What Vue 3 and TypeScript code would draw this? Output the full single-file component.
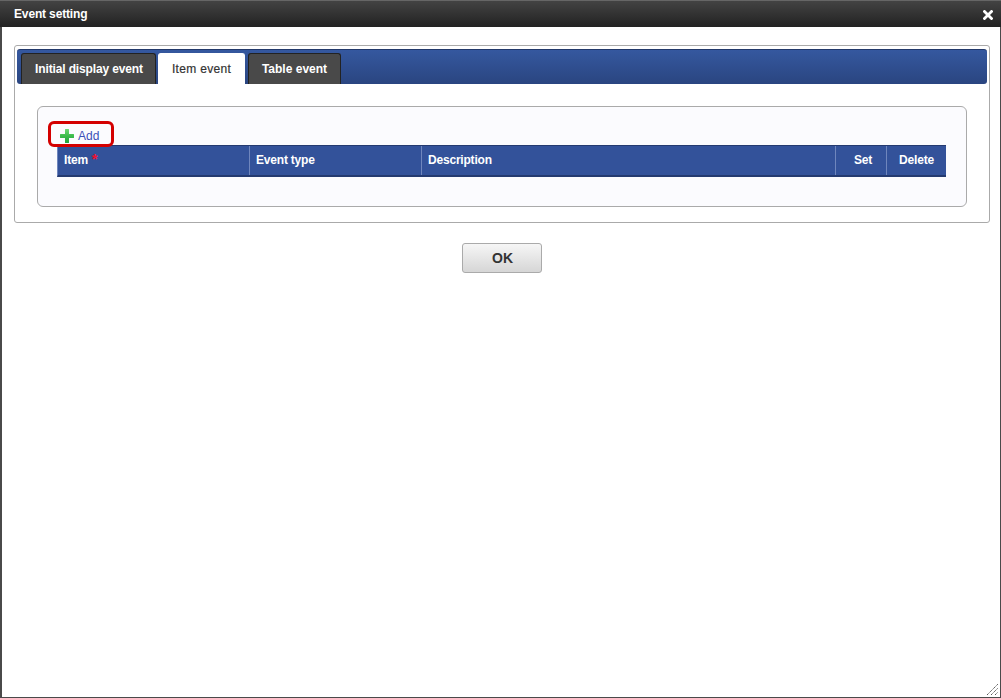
<script setup lang="ts">
const tabs = [
  { label: 'Initial display event', active: false },
  { label: 'Item event', active: true },
  { label: 'Table event', active: false },
]
const columns = [
  { label: 'Item', width: 192, required: true, align: 'left' },
  { label: 'Event type', width: 172, required: false, align: 'left' },
  { label: 'Description', width: 414, required: false, align: 'left' },
  { label: 'Set', width: 51, required: false, align: 'center' },
  { label: 'Delete', width: 60, required: false, align: 'center' },
]
</script>

<template>
  <div class="window">
    <header class="titlebar">
      <span class="title">Event setting</span>
      <svg class="close" width="10" height="10" viewBox="0 0 10 10" aria-label="Close">
        <path d="M1.5 1.5 L8.5 8.5 M8.5 1.5 L1.5 8.5" stroke="#fff" stroke-width="2.8" stroke-linecap="square" />
      </svg>
    </header>
    <main class="content">
      <section class="panel">
        <nav class="tabbar">
          <button v-for="tab in tabs" :key="tab.label" class="tab" :class="{ active: tab.active }">{{ tab.label }}</button>
        </nav>
        <div class="tabbody">
          <div class="group">
            <div class="addrow">
              <span class="add">
                <svg width="14" height="14" viewBox="0 0 14 14">
                  <defs>
                    <linearGradient id="plus" x1="0" y1="0" x2="0" y2="1">
                      <stop offset="0" stop-color="#6fd873" />
                      <stop offset="0.5" stop-color="#3dbb4c" />
                      <stop offset="1" stop-color="#22a33c" />
                    </linearGradient>
                  </defs>
                  <path d="M5 0.5q0-.5.5-.5h3q.5 0 .5.5V5h4.5q.5 0 .5.5v3q0 .5-.5.5H9v4.5q0 .5-.5.5h-3q-.5 0-.5-.5V9H.5Q0 9 0 8.5v-3Q0 5 .5 5H5z" fill="url(#plus)" />
                </svg>
                <span class="addlabel">Add</span>
              </span>
              <span class="highlight"></span>
            </div>
            <div class="thead">
              <div
                v-for="col in columns"
                :key="col.label"
                class="th"
                :class="{ center: col.align === 'center' }"
                :style="{ width: col.width + 'px' }"
              >
                {{ col.label }}<span v-if="col.required" class="req"> *</span>
              </div>
            </div>
          </div>
        </div>
      </section>
      <div class="actions">
        <button class="ok">OK</button>
      </div>
    </main>
    <svg class="grip" width="13" height="13" viewBox="0 0 13 13">
      <path d="M1 12 L12 1 M5 12 L12 5 M9 12 L12 9" stroke="#555" stroke-width="1" stroke-dasharray="1.4 0.6" fill="none" />
    </svg>
  </div>
</template>

<style>
html, body { margin: 0; background: #fff; }
</style>

<style scoped>
.window {
  position: relative;
  box-sizing: border-box;
  width: 1001px;
  height: 698px;
  display: flex;
  flex-direction: column;
  background: #fff;
  border: 1px solid #4a4a4a;
  border-left-width: 2px;
  border-top: 0;
  font-family: "Liberation Sans", Arial, sans-serif;
}
.titlebar {
  box-sizing: border-box;
  height: 27px;
  flex: none;
  margin: 0 -1px 0 -2px;
  display: flex;
  align-items: center;
  justify-content: space-between;
  padding: 0 8px 0 14px;
  background: linear-gradient(#434343, #222);
  border-top: 1px solid #666;
  color: #fff;
  font-size: 12px;
  font-weight: bold;
}
.title { letter-spacing: -0.15px; }
.close { margin-top: 2px; }
.content {
  flex: 1;
  padding: 18px 10px 0 12px;
}
.panel {
  box-sizing: border-box;
  width: 976px;
  height: 178px;
  border: 1px solid #aaa;
  border-radius: 3px;
  padding: 3px 2px;
}
.tabbar {
  box-sizing: border-box;
  height: 35px;
  display: flex;
  align-items: flex-end;
  gap: 2px;
  padding-left: 4px;
  background: linear-gradient(#35589f, #2a4580);
  border-top: 1px solid #22386a;
  border-radius: 3px;
}
.tab {
  box-sizing: border-box;
  height: 31px;
  padding: 0;
  border: 1px solid #222;
  border-bottom: 0;
  border-radius: 3px 3px 0 0;
  background: #494949;
  color: #fff;
  font: bold 12px "Liberation Sans", Arial, sans-serif;
}
.tab.active {
  background: #fff;
  color: #333;
  font-weight: normal;
  letter-spacing: 0.3px;
  -webkit-text-stroke: 0.2px #333;
  border-color: #fff;
}
.tab:nth-child(1) { width: 135px; padding-left: 1px; letter-spacing: -0.14px; }
.tab:nth-child(2) { width: 87px; }
.tab:nth-child(3) { width: 93px; margin-left: 1px; }
.tabbody { padding: 22px 20px 0 20px; }
.group {
  box-sizing: border-box;
  width: 930px;
  height: 101px;
  border: 1px solid #aaa;
  border-radius: 6px;
  background: #fbfbfe;
  padding: 15px 20px 0 19px;
}
.addrow {
  position: relative;
  height: 23px;
}
.add {
  display: inline-flex;
  align-items: center;
  gap: 4px;
  margin-left: 3px;
  height: 28px;
  color: #3b50b8;
  font-size: 12px;
}
.add svg { display: block; }
.highlight {
  position: absolute;
  left: -9px;
  top: -1px;
  width: 66px;
  height: 26px;
  box-sizing: border-box;
  border: 3px solid #d40000;
  border-radius: 6px;
}
.thead {
  box-sizing: border-box;
  width: 889px;
  height: 32px;
  display: flex;
  background: #33529a;
  border-top: 1px solid #243a70;
  border-bottom: 2px solid #243a70;
  border-left: 1px solid #6f86bd;
}
.th {
  box-sizing: border-box;
  flex: none;
  padding: 7px 6px 0 6px;
  color: #fff;
  font-size: 12px;
  font-weight: bold;
  letter-spacing: -0.2px;
  border-right: 1px solid #6f86bd;
  white-space: pre;
}
.th:last-child { border-right: 0; flex: 1; }
.th.center { text-align: center; }
.th:nth-child(4) { padding-left: 10px; }
.req { color: #f01030; font-size: 15px; line-height: 12px; }
.actions {
  display: flex;
  justify-content: center;
  padding-top: 20px;
  width: 976px;
}
.ok {
  box-sizing: border-box;
  width: 80px;
  height: 30px;
  padding: 0 0 0 1px;
  border: 1px solid #aaa;
  border-radius: 3px;
  background: linear-gradient(#f6f6f6, #d6d6d6);
  color: #333;
  font: bold 14px "Liberation Sans", Arial, sans-serif;
}
.grip {
  position: absolute;
  right: 1px;
  bottom: 1px;
}
</style>
